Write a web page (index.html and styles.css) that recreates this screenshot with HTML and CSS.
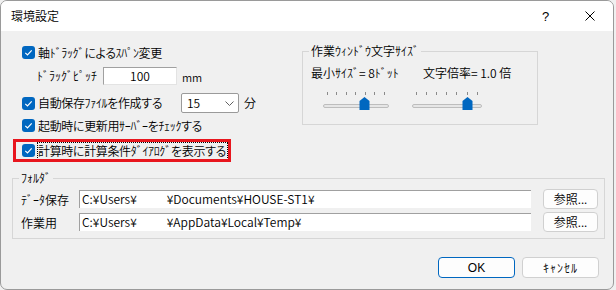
FILE: index.html
```html
<!DOCTYPE html>
<html lang="ja">
<head>
<meta charset="utf-8">
<link rel="stylesheet" href="styles.css">
</head>
<body>
<div class="dialog">
  <div class="titlebar">
    <span class="title">環境設定</span>
    <span class="tb-btn help">?</span>
    <span class="tb-btn close"><svg width="10" height="10" viewBox="0 0 10 10"><path d="M0.5 0.5 L9.5 9.5 M9.5 0.5 L0.5 9.5" stroke="#000" stroke-width="1" fill="none"/></svg></span>
  </div>
  <div class="body">
    <div class="top">
      <div class="left">
        <div class="row r1">
          <svg class="cb" width="13" height="13" viewBox="0 0 13 13"><rect width="13" height="13" rx="3" fill="#0067c0"/><path d="M3.3 6.9 L5.5 9 L9.7 4.4" stroke="#fff" stroke-width="1.2" fill="none"/></svg>
          <span class="cb-text">軸ﾄﾞﾗｯｸﾞによるｽﾊﾟﾝ変更</span>
        </div>
        <div class="row r2">
          <span class="pitch-label">ﾄﾞﾗｯｸﾞﾋﾟｯﾁ</span>
          <span class="edit pitch">100</span>
          <span class="unit">mm</span>
        </div>
        <div class="row r3">
          <svg class="cb" width="13" height="13" viewBox="0 0 13 13"><rect width="13" height="13" rx="3" fill="#0067c0"/><path d="M3.3 6.9 L5.5 9 L9.7 4.4" stroke="#fff" stroke-width="1.2" fill="none"/></svg>
          <span class="cb-text autosave">自動保存ﾌｧｲﾙを作成する</span>
          <span class="combo"><span>15</span><svg width="9" height="5" viewBox="0 0 9 5"><path d="M0.5 0.5 L4.5 4.5 L8.5 0.5" stroke="#606060" stroke-width="1" fill="none"/></svg></span>
          <span class="unit2">分</span>
        </div>
        <div class="row r4">
          <svg class="cb" width="13" height="13" viewBox="0 0 13 13"><rect width="13" height="13" rx="3" fill="#0067c0"/><path d="M3.3 6.9 L5.5 9 L9.7 4.4" stroke="#fff" stroke-width="1.2" fill="none"/></svg>
          <span class="cb-text">起動時に更新用ｻｰﾊﾞｰをﾁｪｯｸする</span>
        </div>
        <div class="row r5 highlight">
          <svg class="cb" width="13" height="13" viewBox="0 0 13 13"><rect width="13" height="13" rx="3" fill="#0067c0"/><path d="M3.3 6.9 L5.5 9 L9.7 4.4" stroke="#fff" stroke-width="1.2" fill="none"/></svg>
          <span class="cb-text focus">計算時に計算条件ﾀﾞｲｱﾛｸﾞを表示する</span>
        </div>
      </div>
      <fieldset class="group size-group">
        <legend>作業ｳｨﾝﾄﾞｳ文字ｻｲｽﾞ</legend>
        <div class="size-labels">
          <span class="col1">最小ｻｲｽﾞ= 8ﾄﾞｯﾄ</span>
          <span class="col2">文字倍率= 1.0 倍</span>
        </div>
        <div class="sliders">
          <svg class="slider s1" width="66" height="19" viewBox="0 0 66 19">
            <g fill="#8a8a8a"><rect x="4" y="0" width="1" height="3"/><rect x="13" y="0" width="1" height="3"/><rect x="23" y="0" width="1" height="3"/><rect x="32" y="0" width="1" height="3"/><rect x="42" y="0" width="1" height="3"/><rect x="51" y="0" width="1" height="3"/><rect x="61" y="0" width="1" height="3"/></g>
            <rect x="0.5" y="12.5" width="65" height="3" rx="1.5" fill="#e6e6e6" stroke="#bdbdbd"/>
            <path d="M36.5 18 V9 L41.5 5 L46.5 9 V18 Z" fill="#0067c0"/>
          </svg>
          <svg class="slider s2" width="70" height="19" viewBox="0 0 70 19">
            <g fill="#8a8a8a"><rect x="4" y="0" width="1" height="3"/><rect x="14" y="0" width="1" height="3"/><rect x="24" y="0" width="1" height="3"/><rect x="34" y="0" width="1" height="3"/><rect x="44" y="0" width="1" height="3"/><rect x="55" y="0" width="1" height="3"/><rect x="65" y="0" width="1" height="3"/></g>
            <rect x="0.5" y="12.5" width="69" height="3" rx="1.5" fill="#e6e6e6" stroke="#bdbdbd"/>
            <path d="M50.5 18 V9 L55.5 5 L60.5 9 V18 Z" fill="#0067c0"/>
          </svg>
        </div>
      </fieldset>
    </div>
    <fieldset class="group folder-group">
      <legend>ﾌｫﾙﾀﾞ</legend>
      <div class="frow first">
        <span class="flabel">ﾃﾞｰﾀ保存</span>
        <span class="path">C:¥Users¥&#8195;&#8195;&#8194;¥Documents¥HOUSE-ST1¥</span>
        <span class="btn browse">参照...</span>
      </div>
      <div class="frow">
        <span class="flabel">作業用</span>
        <span class="path">C:¥Users¥&#8195;&#8195;&#8194;¥AppData¥Local¥Temp¥</span>
        <span class="btn browse">参照...</span>
      </div>
    </fieldset>
    <div class="actions">
      <span class="btn ok">OK</span>
      <span class="btn cancel">ｷｬﾝｾﾙ</span>
    </div>
  </div>
</div>
</body>
</html>
```
FILE: styles.css
```css
* { box-sizing: border-box; }
html, body { margin: 0; padding: 0; background: #f0f0f0; }
body {
  font-family: "Noto Sans CJK JP", "Noto Sans", sans-serif;
  font-size: 12px;
  font-weight: 350;
  color: #000;
  font-feature-settings: "palt";
}
.dialog {
  width: 614px;
  height: 290px;
  border: 1px solid #9a9a9a;
  border-radius: 7px;
  overflow: hidden;
  background: #f0f0f0;
}
.titlebar {
  height: 30px;
  background: #fff;
  display: flex;
  align-items: center;
  padding-left: 10px;
}
.title { flex: 1; font-size: 12px; line-height: 16px; }
.tb-btn {
  width: 46px;
  height: 30px;
  display: flex;
  align-items: center;
  justify-content: center;
}
.help { font-size: 13px; font-family: "Liberation Sans", sans-serif; font-weight: 400; padding-left: 3px; }
.close svg { display: block; }

.top { display: flex; height: 139px; }
.left { width: 301px; padding-left: 21px; padding-top: 11px; }
.row { display: flex; align-items: center; line-height: 16px; }
.cb { flex: none; display: block; }
.cb-text { margin-left: 3px; white-space: nowrap; letter-spacing: -0.35px; }
.r1 { height: 21px; }
.r2 { height: 21px; margin-top: 2px; }
.r3 { height: 22px; margin-top: 6px; }
.r4 { height: 21px; margin-top: 1px; }
.r5 { height: 17px; margin-top: 6px; margin-left: -6px; padding-left: 6px; width: 212px; }
.highlight { outline: 3px solid #e8161e; }
.focus { outline: 1px dotted #000; outline-offset: 0; padding-right: 1px; }

.pitch-label { width: 81px; padding-left: 15px; white-space: nowrap; }
.edit {
  background: #fff;
  border: 1px solid;
  border-color: #a0a0a0 #e3e3e3 #e3e3e3 #a0a0a0;
}
.pitch { width: 74px; height: 18px; text-align: center; line-height: 16px; }
.unit { align-self: flex-end; margin-left: 5px; margin-bottom: 1px; font-size: 11px; }
.autosave { width: 143px; }
.combo {
  width: 58px;
  height: 20px;
  background: #fff;
  border: 1px solid #9a9a9a;
  border-radius: 2px;
  display: flex;
  align-items: center;
  justify-content: space-between;
  padding: 0 4px 0 5px;
}
.unit2 { margin-left: 5px; }

.group {
  margin: 0;
  padding: 0;
  border: 1px solid #d6d6d6;
  min-inline-size: 0;
}
.group legend {
  margin-left: -2px;
  padding: 0 2px;
  line-height: 16px;
  font-size: 12px;
}
.size-group {
  width: 236px;
  height: 82px;
  margin-top: 12px;
  padding: 0 8px;
}
.size-labels { display: flex; margin-top: 6px; line-height: 16px; white-space: nowrap; }
.col1 { width: 112px; }
.sliders { display: flex; margin-top: 11px; }
.slider { display: block; }
.s1 { margin-left: 12px; }
.s2 { margin-left: 23px; }

.folder-group {
  width: 593px;
  height: 69px;
  margin-left: 11px;
  padding: 0 5px 0 8px;
}
.frow { display: flex; align-items: center; height: 20px; margin-top: 3px; }
.flabel { width: 58px; white-space: nowrap; }
.path {
  width: 452px;
  height: 18px;
  background: #fff;
  border-top: 1px solid #a0a0a0;
  border-left: 1px solid #a0a0a0;
  padding-left: 2px;
  line-height: 16px;
  white-space: nowrap;
  overflow: hidden;
}
.btn {
  display: flex;
  align-items: center;
  justify-content: center;
  background: #fdfdfd;
  border: 1px solid #d0d0d0;
  border-radius: 4px;
  line-height: 16px;
}
.browse { width: 55px; height: 20px; margin-left: 12px; }

.actions {
  display: flex;
  justify-content: flex-end;
  gap: 7px;
  margin-top: 18px;
  padding-right: 14px;
}
.ok, .cancel { width: 77px; height: 21px; }
.ok { border: 1px solid #0067c0; font-family: "Liberation Sans", sans-serif; font-weight: 400; }
.cancel { font-feature-settings: normal; letter-spacing: 1px; }
```
